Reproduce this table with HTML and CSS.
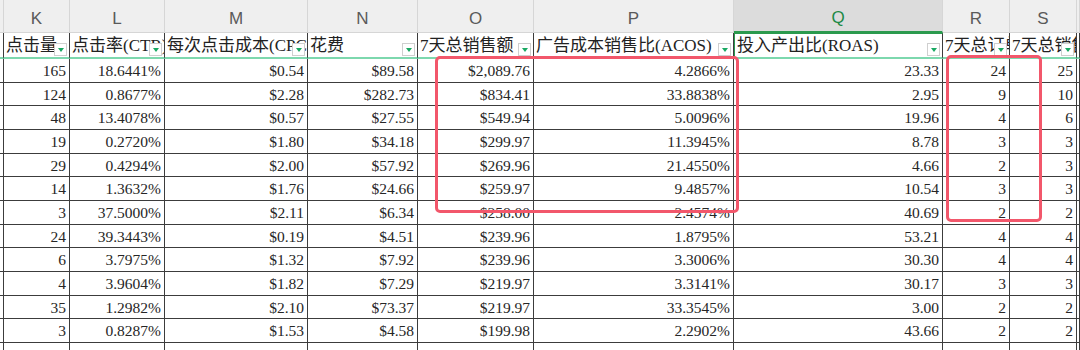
FILE: index.html
```html
<!DOCTYPE html>
<html lang="zh">
<head>
  <meta charset="UTF-8" />
  <title>广告数据</title>
  <link rel="stylesheet" href="styles.css">
</head>
<body>
  <div class="sheet">
    <div class="grid top">
      <!-- lettres de colonnes -->
      <div class="col-letter stub"></div>
      <div class="col-letter">K</div>
      <div class="col-letter">L</div>
      <div class="col-letter">M</div>
      <div class="col-letter">N</div>
      <div class="col-letter">O</div>
      <div class="col-letter">P</div>
      <div class="col-letter active">Q</div>
      <div class="col-letter">R</div>
      <div class="col-letter">S</div>
      <div class="col-letter stub"></div>

      <!-- en-têtes -->
      <div class="head stub"></div>
      <div class="head">点击量<span class="filter"></span></div>
      <div class="head">点击率(CTR)<span class="filter"></span></div>
      <div class="head">每次点击成本(CPC)<span class="filter"></span></div>
      <div class="head">花费<span class="filter"></span></div>
      <div class="head">7天总销售额<span class="filter"></span></div>
      <div class="head">广告成本销售比(ACOS)<span class="filter"></span></div>
      <div class="head active">投入产出比(ROAS)<span class="filter"></span></div>
      <div class="head">7天总订单数<span class="filter"></span></div>
      <div class="head">7天总销售量<span class="filter"></span></div>
      <div class="head stub"></div>
    </div>
    <div class="grid" id="rows"></div>

    <div class="mark mark-sales"></div>
    <div class="mark mark-orders"></div>
  </div>

  <script>
    const data = [
      ['165', '18.6441%', '$0.54', '$89.58', '$2,089.76', '4.2866%', '23.33', '24', '25'],
      ['124', '0.8677%', '$2.28', '$282.73', '$834.41', '33.8838%', '2.95', '9', '10'],
      ['48', '13.4078%', '$0.57', '$27.55', '$549.94', '5.0096%', '19.96', '4', '6'],
      ['19', '0.2720%', '$1.80', '$34.18', '$299.97', '11.3945%', '8.78', '3', '3'],
      ['29', '0.4294%', '$2.00', '$57.92', '$269.96', '21.4550%', '4.66', '2', '3'],
      ['14', '1.3632%', '$1.76', '$24.66', '$259.97', '9.4857%', '10.54', '3', '3'],
      ['3', '37.5000%', '$2.11', '$6.34', '$258.00', '2.4574%', '40.69', '2', '2'],
      ['24', '39.3443%', '$0.19', '$4.51', '$239.96', '1.8795%', '53.21', '4', '4'],
      ['6', '3.7975%', '$1.32', '$7.92', '$239.96', '3.3006%', '30.30', '4', '4'],
      ['4', '3.9604%', '$1.82', '$7.29', '$219.97', '3.3141%', '30.17', '3', '3'],
      ['35', '1.2982%', '$2.10', '$73.37', '$219.97', '33.3545%', '3.00', '2', '2'],
      ['3', '0.8287%', '$1.53', '$4.58', '$199.98', '2.2902%', '43.66', '2', '2'],
      ['', '', '', '', '', '', '', '', '']
    ];

    const rows = document.getElementById('rows');
    data.forEach(function (row) {
      let html = '<div class="cell stub"></div>';
      row.forEach(function (v) {
        html += '<div class="cell">' + v + '</div>';
      });
      html += '<div class="cell stub"></div>';
      rows.insertAdjacentHTML('beforeend', html);
    });
  </script>
</body>
</html>
```

FILE: styles.css
```css
* {
  box-sizing: border-box;
}

body {
  margin: 0;
  background: #fff;
  overflow: hidden;
}

.sheet {
  position: relative;
  width: 1080px;
  height: 350px;
  overflow: hidden;
}

.grid {
  display: grid;
  grid-template-columns: 4px 66px 95px 143px 110px 116px 200px 209px 67px 67px 3px;
  grid-auto-rows: 23.67px;
}

.grid.top {
  grid-template-rows: 33px 26px;
}

/* Lettres de colonnes */
.col-letter {
  background: #efefef;
  border-right: 1px solid #d6d6d6;
  border-bottom: 1px solid #d6d6d6;
  display: flex;
  align-items: center;
  justify-content: center;
  font-family: 'Liberation Sans', Arial, sans-serif;
  font-size: 17px;
  color: #5a5a5a;
  padding-top: 5px;
}

.col-letter.active {
  background: #dcdcdc;
  color: #1d8a47;
  border-bottom: 2px solid #2b9a4e;
}

/* En-têtes */
.head {
  position: relative;
  border-right: 1.5px solid #3c3c3c;
  border-bottom: 2px solid #7dd8ae;
  font-family: 'Liberation Serif', 'Noto Sans CJK SC', serif;
  font-size: 17px;
  color: #222;
  white-space: nowrap;
  overflow: hidden;
  padding: 2px 0 0 2px;
  line-height: 22px;
}

.head.active {
  border-top: 1.5px solid #2b9a4e;
  border-left: 1.5px solid #2b9a4e;
  padding-top: 1px;
}

.filter {
  position: absolute;
  right: 2px;
  bottom: 1px;
  width: 13px;
  height: 13px;
  background: #fff;
  border: 1px solid #cfcfcf;
}

.filter::after {
  content: '';
  position: absolute;
  left: 3px;
  top: 4px;
  border-left: 3px solid transparent;
  border-right: 3px solid transparent;
  border-top: 4px solid #18a862;
}

/* Cellules */
.cell {
  border-right: 1.5px solid #3c3c3c;
  border-bottom: 1.5px solid #3c3c3c;
  font-family: 'Liberation Serif', serif;
  font-size: 15.5px;
  color: #262626;
  text-align: right;
  padding: 0 3px 0 0;
  line-height: 23px;
  white-space: nowrap;
  overflow: hidden;
}

.stub {
  padding: 0;
}

/* Cadres rouges */
.mark {
  position: absolute;
  border: 3px solid #f2576b;
  border-radius: 5px;
}

.mark-sales {
  left: 435px;
  top: 56px;
  width: 304px;
  height: 157px;
}

.mark-orders {
  left: 946px;
  top: 55px;
  width: 96px;
  height: 167px;
}
```
